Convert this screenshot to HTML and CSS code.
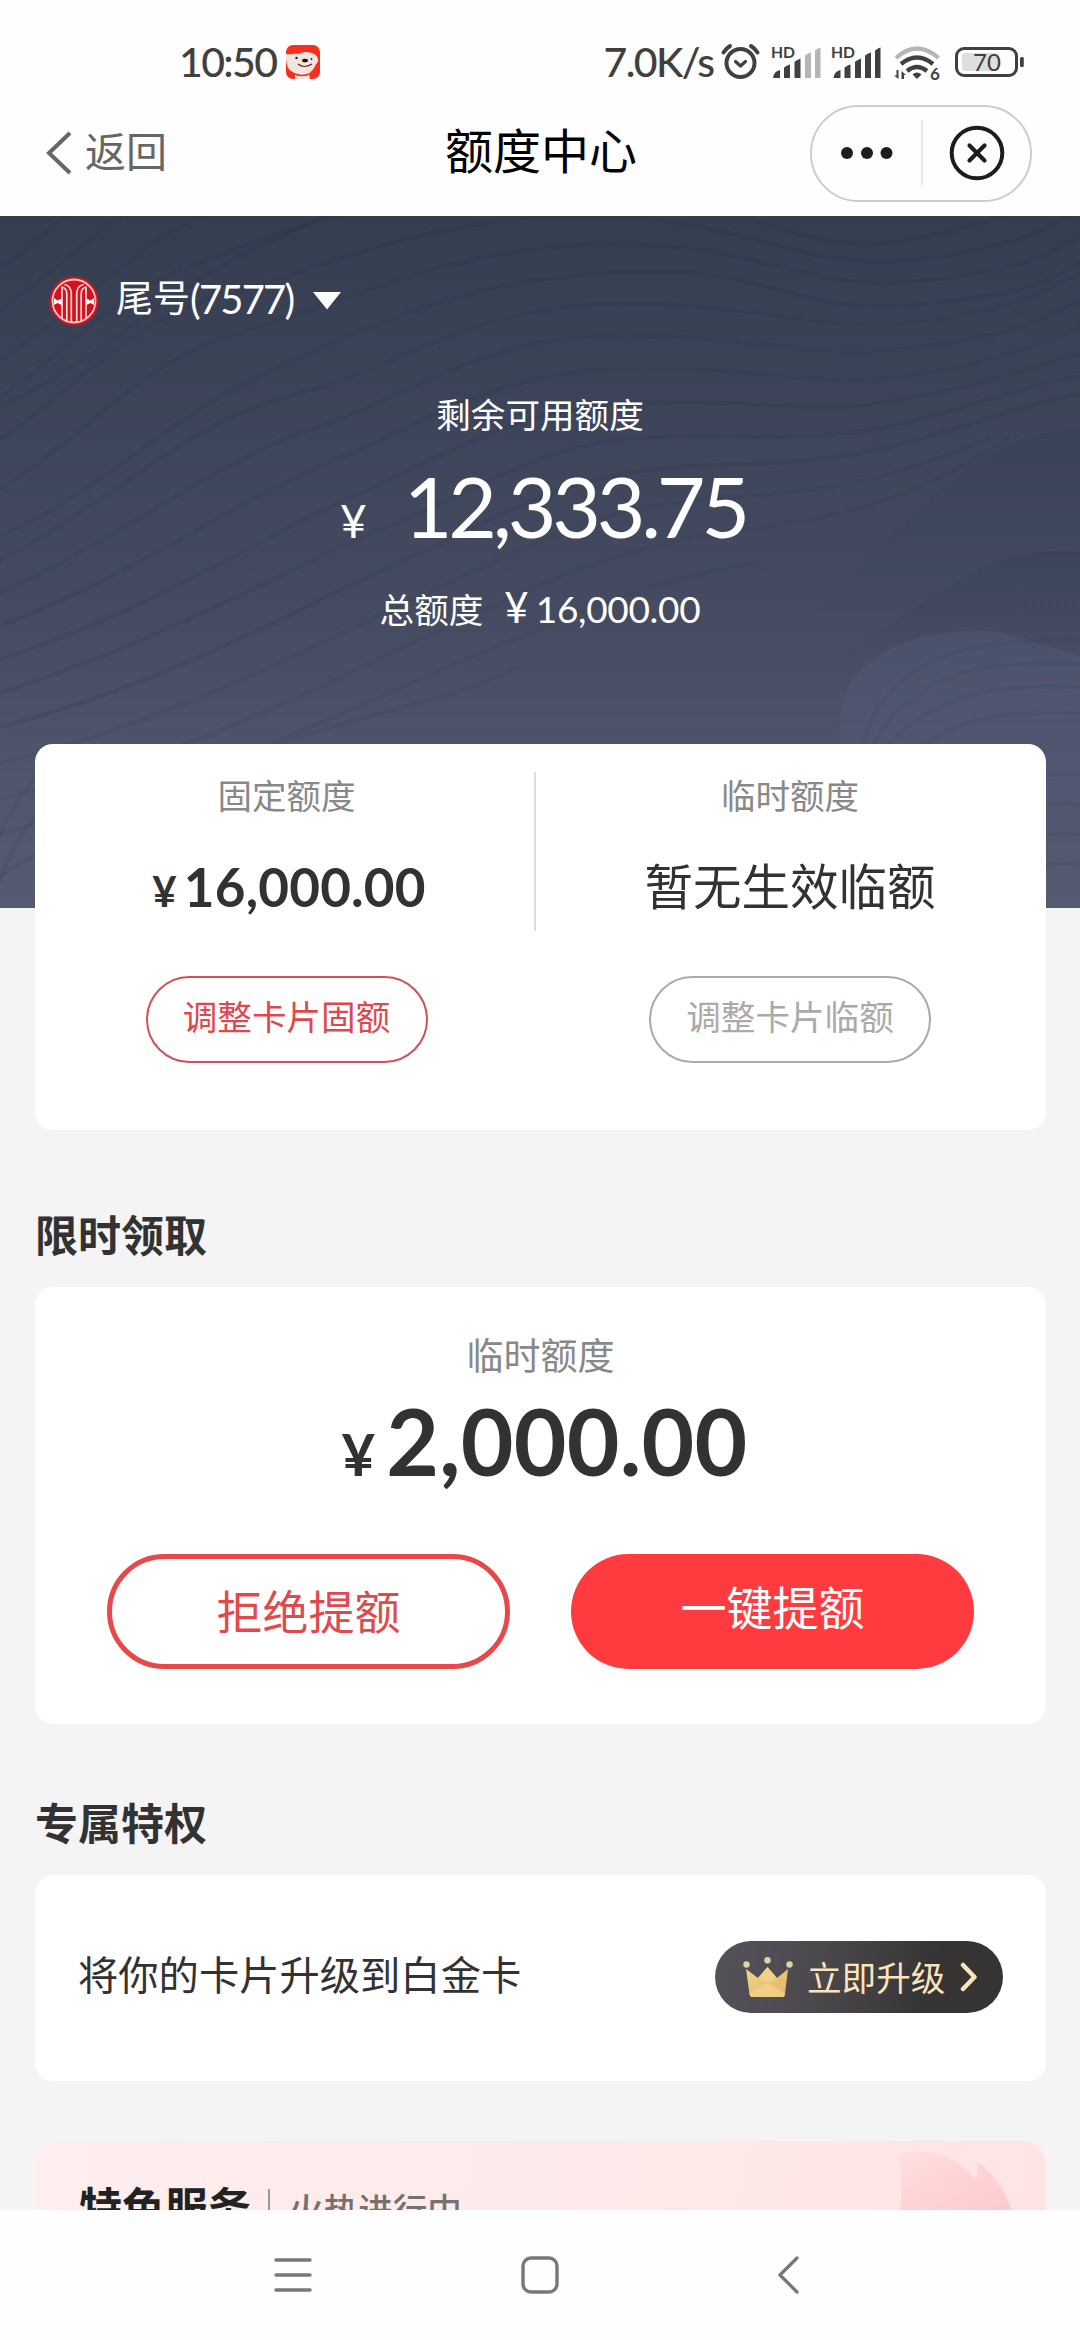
FILE: index.html
```html
<!DOCTYPE html>
<html lang="zh-CN">
<head>
<meta charset="utf-8">
<title>额度中心</title>
<link rel="stylesheet" href="styles.css">
</head>
<body>
<div class="screen">
  <header class="top">
    <div class="status">
      <span class="time num">10:50</span>
      <svg class="app-icon" width="34" height="34" viewBox="0 0 34 34">
        <rect width="34" height="34" rx="7" fill="#f5301f"/>
        <path d="M0 9C5 10 9 8 13 9C18 6 24 7 28 9C33 11 33 18 30 19C28 25 24 27 23 29L24 34H9L9 29C9 28 7 27 5 26C0 23 0 14 0 9Z" fill="#f3e4df"/>
        <path d="M9 29Q16 32 23 29" fill="none" stroke="#f5301f" stroke-width="1.600"/>
        <circle cx="10.500" cy="13" r="1.200" fill="#222"/><ellipse cx="19" cy="15.500" rx="3" ry="1.800" fill="#111"/>
        <circle cx="25.500" cy="14" r=".9" fill="#222"/>
        <path d="M12 19Q18 24 26 19" fill="none" stroke="#4a2a26" stroke-width="1.200"/>
      </svg>
      <span class="speed num">7.0K/s</span>
      <svg class="status-icons" width="310" height="40" viewBox="716 42 310 40">
        <g fill="none" stroke="#404040" stroke-linecap="round">
          <circle cx="740.500" cy="63" r="14" stroke-width="4"/>
          <path d="M735.500 61.500L740.500 66L745.500 61.500" stroke-width="3.200" stroke-linejoin="round"/>
          <path d="M723.500 52.500Q726 48.500 730 46M757.500 52.500Q755 48.500 751 46" stroke-width="4"/>
        </g>
        <g fill="#404040">
          <path d="M773 78Q774 71 780 70V78ZM784 78V68Q785 66 790 64.500V78ZM794.500 78V62Q796 60 800.500 58.500V78Z"/>
          <text x="771" y="58.300" class="mini num" textLength="24" lengthAdjust="spacingAndGlyphs">HD</text>
        </g>
        <path d="M805 78V56Q806 54 811 52.500V78ZM815 78V51Q816 49 820.500 47.500V78Z" fill="#b5b5b5"/>
        <g fill="#404040">
          <path d="M833.500 78Q834.500 71 840.500 70V78ZM844.500 78V68Q845.500 66 850.500 64.500V78ZM855 78V62Q856.500 60 861 58.500V78ZM865 78V56Q866 54 871 52.500V78ZM875 78V51Q876 49 880.500 47.500V78Z"/>
          <text x="831" y="58.300" class="mini num" textLength="24" lengthAdjust="spacingAndGlyphs">HD</text>
          <path d="M917 79L912.500 74.500Q917 70.500 921.500 74.500Z"/>
          <path d="M898.500 70V79L894 75.500H896.500V70ZM901.500 79V71L906 75H904V79Z"/>
          <text x="930" y="80" class="six num">6</text>
        </g>
        <g fill="none" stroke="#404040" stroke-width="4.200">
          <path d="M896 58Q917 39 938.500 58" stroke="#b5b5b5"/>
          <path d="M901 64Q917 51 933 64"/>
          <path d="M907 71Q917 63 927 71"/>
        </g>
        <rect x="962" y="53" width="37" height="18" rx="3" fill="#dedede"/>
        <rect x="956.500" y="48.500" width="60" height="27" rx="7.500" fill="none" stroke="#404040" stroke-width="3"/>
        <rect x="1020" y="57" width="3.800" height="10" rx="1.500" fill="#404040"/>
        <text x="973" y="71" class="battery num">70</text>
      </svg>
    </div>
    <nav class="titlebar">
      <a class="back">
        <svg width="26" height="44" viewBox="0 0 26 44"><path d="M24 2L3 22L24 42" fill="none" stroke="#666" stroke-width="4"/></svg>
        <span>返回</span>
      </a>
      <h1>额度中心</h1>
      <div class="capsule">
        <svg width="52" height="12" viewBox="0 0 52 12" fill="#1d1d1d"><circle cx="6" cy="6" r="6"/><circle cx="26" cy="6" r="6"/><circle cx="45.500" cy="6" r="6"/></svg>
        <i></i>
        <svg width="56" height="56" viewBox="0 0 56 56" fill="none" stroke="#1d1d1d"><circle cx="28" cy="28" r="25.300" stroke-width="4"/><path d="M20.500 20.500L35.500 35.500M35.500 20.500L20.500 35.500" stroke-width="4.200" stroke-linecap="round"/></svg>
      </div>
    </nav>
  </header>

  <section class="hero">
    <svg class="waves" width="1080" height="692" viewBox="0 0 1080 692">
      <defs>
        <linearGradient id="hill" x1="0" y1="0" x2="0" y2="1"><stop offset="0" stop-color="#2f3850" stop-opacity=".24"/><stop offset=".6" stop-color="#2f3850" stop-opacity="0"/></linearGradient>
        <linearGradient id="dune" x1="0" y1="0" x2="0" y2="1"><stop offset="0" stop-color="#636b90" stop-opacity=".2"/><stop offset="1" stop-color="#636b90" stop-opacity=".04"/></linearGradient>
        <g id="contours">
          <path d="M-60 190C40 160 80 70 190 30S420 -60 600 -46S800 30 930 0S1050 -50 1120 -70"/>
          <path d="M-60 236C50 190 110 90 215 62S440 -25 600 -20S800 40 930 22S1050 -20 1120 -44"/>
          <path d="M-60 282C60 240 120 130 240 96S450 10 610 8S800 60 930 44S1050 10 1120 -18"/>
          <path d="M-60 320C70 290 150 190 260 140S460 44 620 36S790 84 930 68S1050 36 1120 8"/>
        </g>
      </defs>
      <g class="contour-lines">
        <use href="#contours" y="-110"/>
        <use href="#contours" y="20"/>
        <path d="M-60 370C80 320 170 210 290 180S470 86 630 88S810 120 930 104S1050 64 1120 40"/>
        <path d="M-60 400C90 350 200 250 310 214S480 116 640 120S810 146 930 130S1050 90 1120 70"/>
        <path d="M-60 430C110 380 220 290 330 246S500 150 650 152S820 176 930 156S1050 118 1120 100"/>
        <path d="M-60 462C130 410 240 330 350 282S520 186 660 186S830 202 940 176S1050 144 1120 128"/>
        <path d="M-60 494C140 440 260 364 380 314S550 220 680 220S850 226 960 192S1060 164 1120 154"/>
        <path d="M-60 526C150 480 280 400 400 346S570 254 700 250S870 240 970 208S1070 180 1120 174"/>
        <path class="faint" d="M-60 560C150 520 290 440 420 380S600 290 720 282S890 264 990 222"/>
        <path class="faint" d="M-60 594C150 560 300 480 440 414S630 330 740 314S900 290 1010 222"/>
        <path class="faint" d="M-60 630C150 590 310 510 460 446S650 366 760 346"/>
        <path class="faint" d="M-60 720C20 610 130 620 220 560S420 500 520 450"/>
        <path class="faint" d="M860 540Q880 440 1000 428T1120 440M856 570Q890 460 1000 450T1120 466M850 600Q890 486 1000 474T1120 490M846 630Q900 512 1000 500T1120 516"/>
        <path class="faint" d="M-10 640Q10 590 36 560M-10 690Q10 630 36 600M1040 560Q1070 556 1090 562M1040 590Q1070 584 1090 592M1040 620Q1070 614 1090 622M1040 650Q1070 644 1090 652"/>
      </g>
      <path d="M560 530C760 500 850 340 970 250Q1030 210 1080 214V480H800Z" fill="url(#hill)"/>
      <path d="M620 540C790 490 860 420 980 352Q1030 330 1080 336V530H840Z" fill="url(#hill)"/>
      <path d="M840 528C830 430 930 410 1000 416T1080 440V600H840Z" fill="url(#dune)"/>
    </svg>
    <div class="hero-content">
      <div class="account">
        <svg width="50" height="50" viewBox="0 0 50 50">
          <circle cx="25" cy="25" r="24.500" fill="#d3121d"/><circle cx="25" cy="25" r="21.500" fill="#d3121d" stroke="#f4c9cc" stroke-width="1.800"/>
          <g fill="none" stroke="#f7dcdc" stroke-width="1.700">
            <path d="M13 10.500V42M37 10.500V42M13 11Q17.800 12 17.800 18V45M37 11Q32.200 12 32.200 18V45M15.500 8.500Q22.300 10 22.300 18V46M34.500 8.500Q27.700 10 27.700 18V46"/>
          </g>
          <path d="M5 22L8.500 24.500L12.500 22.500V29L8.500 27L5 29ZM45 22L41.500 24.500L37.500 22.500V29L41.500 27L45 29Z" fill="#fff"/>
        </svg>
        <span class="tail">尾号</span><span class="tail-num num">(7577)</span>
        <svg width="28" height="18" viewBox="0 0 28 18"><path d="M0 0H28L14 17.500Z" fill="#fff"/></svg>
      </div>
      <div class="avail-label">剩余可用额度</div>
      <div class="avail"><span class="yen num">¥</span><span class="value num">12,333.75</span></div>
      <div class="total"><span>总额度</span><span class="yen num">¥</span><span class="value num">16,000.00</span></div>
    </div>
  </section>

  <main>
    <section class="card limits">
      <div class="limit fixed">
        <div class="label">固定额度</div>
        <div class="amount num"><span class="yen">¥</span><span>16,000.00</span></div>
        <button class="adjust red">调整卡片固额</button>
      </div>
      <div class="limit">
        <div class="label">临时额度</div>
        <div class="none">暂无生效临额</div>
        <button class="adjust">调整卡片临额</button>
      </div>
    </section>

    <h2>限时领取</h2>
    <section class="card claim">
      <div class="label">临时额度</div>
      <div class="amount num"><span class="yen">¥</span><span>2,000.00</span></div>
      <div class="actions">
        <button class="reject">拒绝提额</button>
        <button class="accept">一键提额</button>
      </div>
    </section>

    <h2>专属特权</h2>
    <section class="card upgrade">
      <span>将你的卡片升级到白金卡</span>
      <a class="pill">
        <svg width="50" height="40" viewBox="0 0 50 40">
          <defs><linearGradient id="gold" x1="0" y1="0" x2="1" y2="1"><stop offset="0" stop-color="#f3d28c"/><stop offset="1" stop-color="#dfb566"/></linearGradient></defs>
          <path d="M3 12L15 21L24.500 10L34 21L45 12L42 37Q42 40 39 40H9Q7 40 6.500 37Z" fill="url(#gold)"/>
          <path d="M24.500 10L34 21L24.500 26L15 21ZM6 36L24.500 26L42 36L41 40H8Z" fill="#f6d78e" opacity=".65"/>
          <g fill="#e3d3a6"><circle cx="3.500" cy="7.500" r="3.200"/><circle cx="24.500" cy="3.200" r="3.200"/><circle cx="46.500" cy="7.500" r="3.200"/></g>
        </svg>
        <span>立即升级</span>
        <svg width="18" height="30" viewBox="0 0 18 30"><path d="M3 3L14.500 15L3 27" fill="none" stroke="#fbe4bb" stroke-width="4.500" stroke-linecap="round" stroke-linejoin="round"/></svg>
      </a>
    </section>

    <section class="services">
      <svg class="flame" width="140" height="69" viewBox="0 0 140 69">
        <defs><linearGradient id="fl" x1="0" y1="0" x2="1" y2="1"><stop offset="0" stop-color="#ffdfe0"/><stop offset="1" stop-color="#ffc9cc"/></linearGradient></defs>
        <path d="M2 13Q52 2 80 40Q82 30 81 20Q108 42 115 69H4Q8 38 2 13Z" fill="url(#fl)"/>
      </svg>
      <b>特色服务</b><i></i><span>火热进行中</span>
    </section>
  </main>

  <footer class="sysnav">
    <svg width="38" height="38" viewBox="0 0 38 38" stroke="#777" stroke-width="3.400" stroke-linecap="round"><path d="M2 4H36M2 19H36M2 34H36"/></svg>
    <svg width="38" height="38" viewBox="0 0 38 38"><rect x="2" y="2" width="34" height="34" rx="8" fill="none" stroke="#777" stroke-width="3.400"/></svg>
    <svg width="38" height="38" viewBox="0 0 38 38"><path d="M28 2L11 19L28 36" fill="none" stroke="#777" stroke-width="3.200" stroke-linecap="round" stroke-linejoin="round"/></svg>
  </footer>
</div>
</body>
</html>
```
FILE: styles.css
```css
* { box-sizing: border-box; }
body {
  margin: 0;
  background: #f4f4f4;
  color: #323232;
  font-family: "Noto Sans CJK SC", sans-serif;
}
h1, h2 { margin: 0; }
svg { display: block; flex: none; }
button { font-family: inherit; background: none; padding: 0; display: block; }
.num { font-family: Lato, "Liberation Sans", sans-serif; }

.screen {
  width: 1080px;
  height: 2340px;
  overflow: hidden;
  display: flex;
  flex-direction: column;
  background: #f4f4f4;
}

/* top area */
.top { height: 216px; background: #fefefe; flex: none; }
.status { height: 103px; padding: 42px 54px 0 179px; display: flex; align-items: flex-start; }
.time, .speed { font-size: 41px; line-height: 40px; color: #404040; font-weight: 500; white-space: nowrap; }
.time { width: 107px; letter-spacing: -1.6px; }
.app-icon { margin-top: 3px; }
.speed { margin-left: 284px; width: 113px; letter-spacing: -1.6px; }
.mini { font-size: 15px; font-weight: 700; }
.six { font-size: 17px; font-weight: 700; }
.battery { font-size: 24px; fill: #404040; }
.titlebar {
  height: 100px;
  display: grid;
  grid-template-columns: 1fr auto 1fr;
  align-items: center;
  padding: 0 48px 0 46px;
}
.back { display: flex; align-items: center; gap: 13px; font-size: 41px; line-height: 44px; color: #666; }
.back span { position: relative; top: -4px; }
h1 { font-size: 48px; line-height: 60px; font-weight: 400; color: #000; position: relative; top: -5px; left: 2px; }
.capsule {
  justify-self: end;
  width: 222px;
  height: 97px;
  border: 2px solid #ccc;
  border-radius: 49px;
  display: flex;
  align-items: center;
  padding-left: 29px;
}
.capsule i { width: 2px; height: 66px; background: #ebebeb; margin: 0 26px 0 28px; }

/* dark panel */
.hero {
  height: 692px;
  flex: none;
  position: relative;
  background: linear-gradient(#353d51, #454c61 58%, #50566e 82%, #555b70);
  color: #fff;
}
.waves { position: absolute; left: 0; top: 0; }
.contour-lines { fill: none; stroke: #242c40; stroke-opacity: .15; stroke-width: 4; }
.faint { stroke-opacity: .09; }
.hero-content { position: relative; padding-top: 60px; }
.account { display: flex; align-items: center; height: 50px; padding-left: 49px; }
.tail { font-size: 37px; line-height: 50px; margin-left: 17px; position: relative; top: -5px; }
.tail-num { font-size: 40px; line-height: 50px; letter-spacing: -1.8px; position: relative; top: -2px; margin-right: 20px; }
.avail-label { font-size: 34.600px; line-height: 50px; text-align: center; margin-top: 62px; }
.avail { display: flex; justify-content: center; align-items: baseline; margin: 26px 0 0 6px; line-height: 84px; height: 84px; }
.avail .yen { font-size: 46px; margin-right: 37px; }
.avail .value { font-size: 84px; letter-spacing: -4.200px; }
.total { display: flex; justify-content: center; align-items: baseline; height: 50px; line-height: 50px; font-size: 34.600px; margin-top: 34px; }
.total .yen { font-size: 42px; margin: 0 7px 0 21px; }
.total .value { font-size: 37px; letter-spacing: -.3px; }

/* cards */
main { flex: 1; min-height: 0; overflow: hidden; margin-top: -164px; padding: 0 34px 0 35px; position: relative; }
.card { background: #fff; border-radius: 18px; }
.label { font-size: 34.500px; line-height: 50px; color: #888; text-align: center; }
.limits { height: 386px; display: grid; grid-template-columns: 501px 1fr; padding-top: 28px; }
.limit { display: flex; flex-direction: column; align-items: center; }
.limit .label { margin: -3px 0 3px; }
.fixed { position: relative; }
.fixed::after { content: ""; position: absolute; right: 0; top: 0; width: 2px; height: 159px; background: #ddd; }
.amount { display: flex; align-items: baseline; font-weight: 700; }
.fixed .amount { font-size: 53px; height: 60px; line-height: 60px; margin: 35px 0 2px; letter-spacing: .2px; padding-left: 5px; }
.fixed .yen { font-size: 42px; margin-right: 7px; }
.none { font-size: 48.500px; height: 60px; line-height: 60px; margin: 32px 0 5px; color: #323232; }
.fixed .label, .fixed .amount, .fixed .adjust { position: relative; left: 1px; }
.adjust { width: 282px; height: 87px; border: 2px solid #aaa; border-radius: 44px; color: #aaa; font-size: 34.600px; line-height: 40px; padding-bottom: 9px; margin-top: 57px; }
.limit + .limit { padding-right: 2px; }
.adjust.red { border-color: #cf5059; color: #e0474c; }

h2 { font-size: 43px; line-height: 60px; font-weight: 700; color: #323232; }
.limits + h2 { margin: 73px 0 24px; }
.claim + h2 { margin: 67px 0 24px; }
.claim { height: 437px; padding-top: 42px; }
.claim .label { font-size: 37px; }
.claim .amount { font-size: 91px; height: 100px; line-height: 100px; justify-content: center; margin: 12px 0 0 8px; letter-spacing: .2px; }
.claim .yen { font-size: 58px; margin-right: 11px; }
.actions { display: flex; gap: 61px; margin: 63px 0 0 72px; }
.actions button { width: 403px; height: 115px; border-radius: 58px; font-size: 46px; line-height: 56px; }
.actions .reject { border: 5px solid #e8474b; color: #df4a4d; padding-bottom: 5px; }
.actions .accept { background: #ff3b3f; border: 0; color: #fff; padding-bottom: 13px; }

.upgrade { height: 206px; display: flex; align-items: center; justify-content: space-between; padding: 0 43px 2px 43px; font-size: 40.300px; }
.upgrade > span { position: relative; top: -5px; }
.pill { width: 288px; height: 72px; border-radius: 36px; background: linear-gradient(100deg, #55515a, #4c494e 35%, #353433 75%); display: flex; align-items: center; padding-left: 28px; color: #fbe4bb; font-size: 34.600px; line-height: 40px; }
.pill span { margin: 0 15px 0 14px; position: relative; top: -1px; }

.services { height: 200px; margin-top: 60px; border-radius: 22px; background: linear-gradient(100deg, #ffeeef, #fdeaea 50%, #ffe4e3); position: relative; display: flex; align-items: flex-start; padding: 34px 0 0 44px; }
.services b { font-size: 43px; line-height: 60px; color: #222; }
.services i { width: 2px; height: 40px; background: #999; margin: 14px 19px 0 17px; }
.services span { font-size: 34.600px; line-height: 50px; color: #777070; font-weight: 500; margin-top: 8px; }
.flame { position: absolute; right: 10px; top: 0; }

.sysnav { height: 130px; flex: none; background: #fefefe; display: flex; justify-content: center; gap: 209.500px; padding-top: 46px; }
```
